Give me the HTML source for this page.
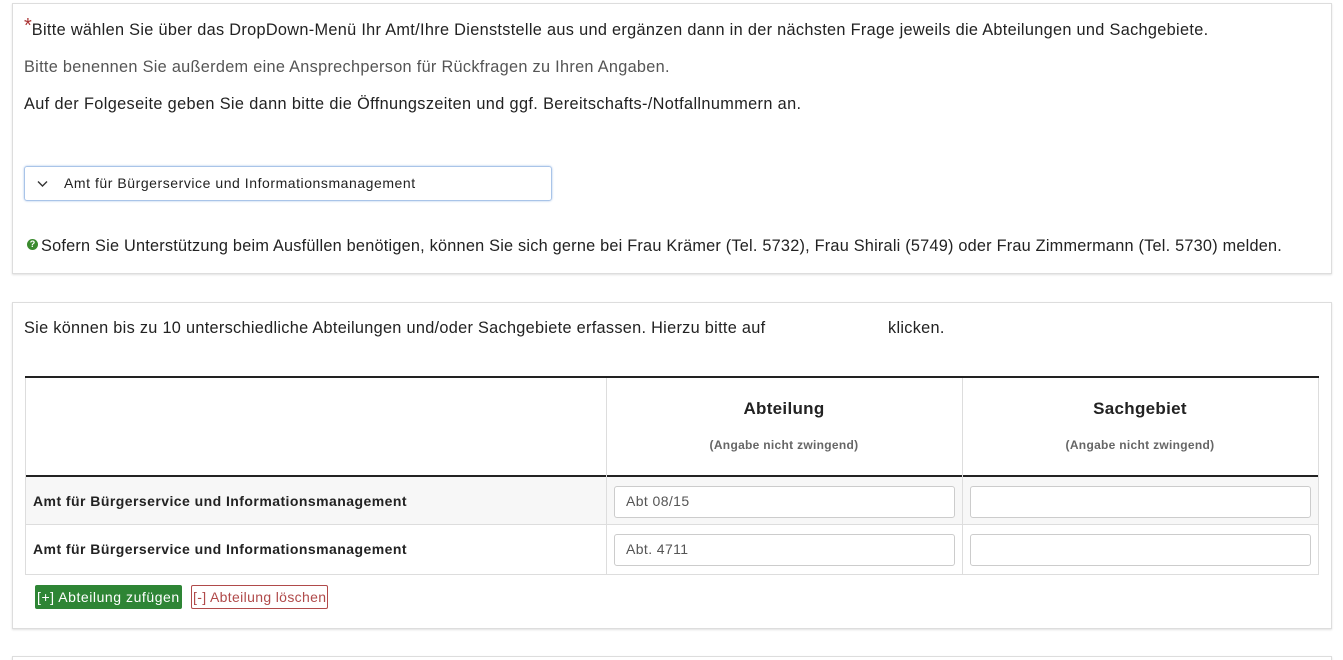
<!DOCTYPE html>
<html><head><meta charset="utf-8"><style>
html,body{margin:0;background:#fff;font-family:"Liberation Sans",sans-serif;color:#222;width:1343px;height:660px;overflow:hidden;position:relative}
.p{position:absolute;left:12px;width:1318px;border:1px solid #ddd;box-shadow:0 1px 2px rgba(0,0,0,.12);background:#fff}
.t{position:absolute;white-space:nowrap;font-size:16.3px;letter-spacing:0.3px}
.s{font-size:14px;letter-spacing:0.55px}
.inp{position:absolute;height:30px;border:1px solid #ccc;border-radius:3px;box-sizing:border-box;font-size:14px;color:#555;padding:6px 11px;background:#fff;letter-spacing:0.4px}
</style></head><body>
<div class="p" style="top:3px;height:269px"></div>
<div class="t" style="left:24px;top:20px;line-height:19px"><span style="color:#a33;font-size:20px;position:relative;top:-3px;letter-spacing:0">*</span><span style="letter-spacing:0.32px">Bitte wählen Sie über das DropDown-Menü Ihr Amt/Ihre Dienststelle aus und ergänzen dann in der nächsten Frage jeweils die Abteilungen und Sachgebiete.</span></div>
<div class="t" style="left:24px;top:58px;color:#555">Bitte benennen Sie außerdem eine Ansprechperson für Rückfragen zu Ihren Angaben.</div>
<div class="t" style="left:24px;top:95px;letter-spacing:0.37px">Auf der Folgeseite geben Sie dann bitte die Öffnungszeiten und ggf. Bereitschafts-/Notfallnummern an.</div>
<div style="position:absolute;left:24px;top:166px;width:528px;height:35px;border:1px solid #a9c4e8;box-shadow:0 0 2px #a9c4e8;border-radius:3px;box-sizing:border-box"></div>
<svg style="position:absolute;left:37px;top:180px" width="11" height="8"><path d="M1 1.5 5.5 6 10 1.5" fill="none" stroke="#333" stroke-width="1.4"/></svg>
<div class="t s" style="left:64px;top:175px">Amt für Bürgerservice und Informationsmanagement</div>
<div style="position:absolute;left:27px;top:239px;width:11px;height:11px;border-radius:50%;background:#3a8a2e;color:#fff;font-size:9px;font-weight:bold;text-align:center;line-height:11px">?</div>
<div class="t" style="left:41px;top:237px;letter-spacing:0.22px">Sofern Sie Unterstützung beim Ausfüllen benötigen, können Sie sich gerne bei Frau Krämer (Tel. 5732), Frau Shirali (5749) oder Frau Zimmermann (Tel. 5730) melden.</div>

<div class="p" style="top:302px;height:325px"></div>
<div class="t" style="left:24px;top:319px">Sie können bis zu 10 unterschiedliche Abteilungen und/oder Sachgebiete erfassen. Hierzu bitte auf</div>
<div class="t" style="left:888px;top:319px">klicken.</div>
<div style="position:absolute;left:25px;top:376px;width:1294px;height:2px;background:#222"></div>
<div style="position:absolute;left:25px;top:475px;width:1294px;height:2px;background:#222"></div>
<div style="position:absolute;left:25px;top:477px;width:1294px;height:48px;background:#f7f7f7;border-bottom:1px solid #ddd;box-sizing:border-box"></div>
<div style="position:absolute;left:25px;top:574px;width:1294px;height:1px;background:#ddd"></div>
<div style="position:absolute;left:25px;top:378px;width:1px;height:197px;background:#ddd"></div>
<div style="position:absolute;left:1318px;top:378px;width:1px;height:197px;background:#ddd"></div>
<div style="position:absolute;left:606px;top:378px;width:1px;height:197px;background:#ddd"></div>
<div style="position:absolute;left:962px;top:378px;width:1px;height:197px;background:#ddd"></div>
<div class="t" style="left:606px;width:356px;text-align:center;top:399px;font-weight:bold;font-size:17px">Abteilung</div>
<div class="t" style="left:606px;width:356px;text-align:center;top:438px;font-weight:bold;font-size:12px;color:#666">(Angabe nicht zwingend)</div>
<div class="t" style="left:962px;width:356px;text-align:center;top:399px;font-weight:bold;font-size:17px">Sachgebiet</div>
<div class="t" style="left:962px;width:356px;text-align:center;top:438px;font-weight:bold;font-size:12px;color:#666">(Angabe nicht zwingend)</div>
<div class="t s" style="left:33px;top:493px;font-weight:bold;letter-spacing:0.45px">Amt für Bürgerservice und Informationsmanagement</div>
<div class="t s" style="left:33px;top:541px;font-weight:bold;letter-spacing:0.45px">Amt für Bürgerservice und Informationsmanagement</div>
<div class="inp" style="left:614px;top:486px;width:341px;height:32px">Abt 08/15</div>
<div class="inp" style="left:970px;top:486px;width:341px;height:32px"></div>
<div class="inp" style="left:614px;top:534px;width:341px;height:32px">Abt. 4711</div>
<div class="inp" style="left:970px;top:534px;width:341px;height:32px"></div>
<div class="t s" style="left:35px;top:585px;height:24px;line-height:24px;background:#2e8535;color:#fff;padding:0 2px;border-radius:2px">[+] Abteilung zufügen</div>
<div class="t s" style="left:191px;top:585px;height:22px;line-height:22px;border:1px solid #b04a4a;color:#b04a4a;padding:0 1px;border-radius:2px;letter-spacing:0.35px">[-] Abteilung löschen</div>
<div class="p" style="top:656px;height:20px"></div>
</body></html>
